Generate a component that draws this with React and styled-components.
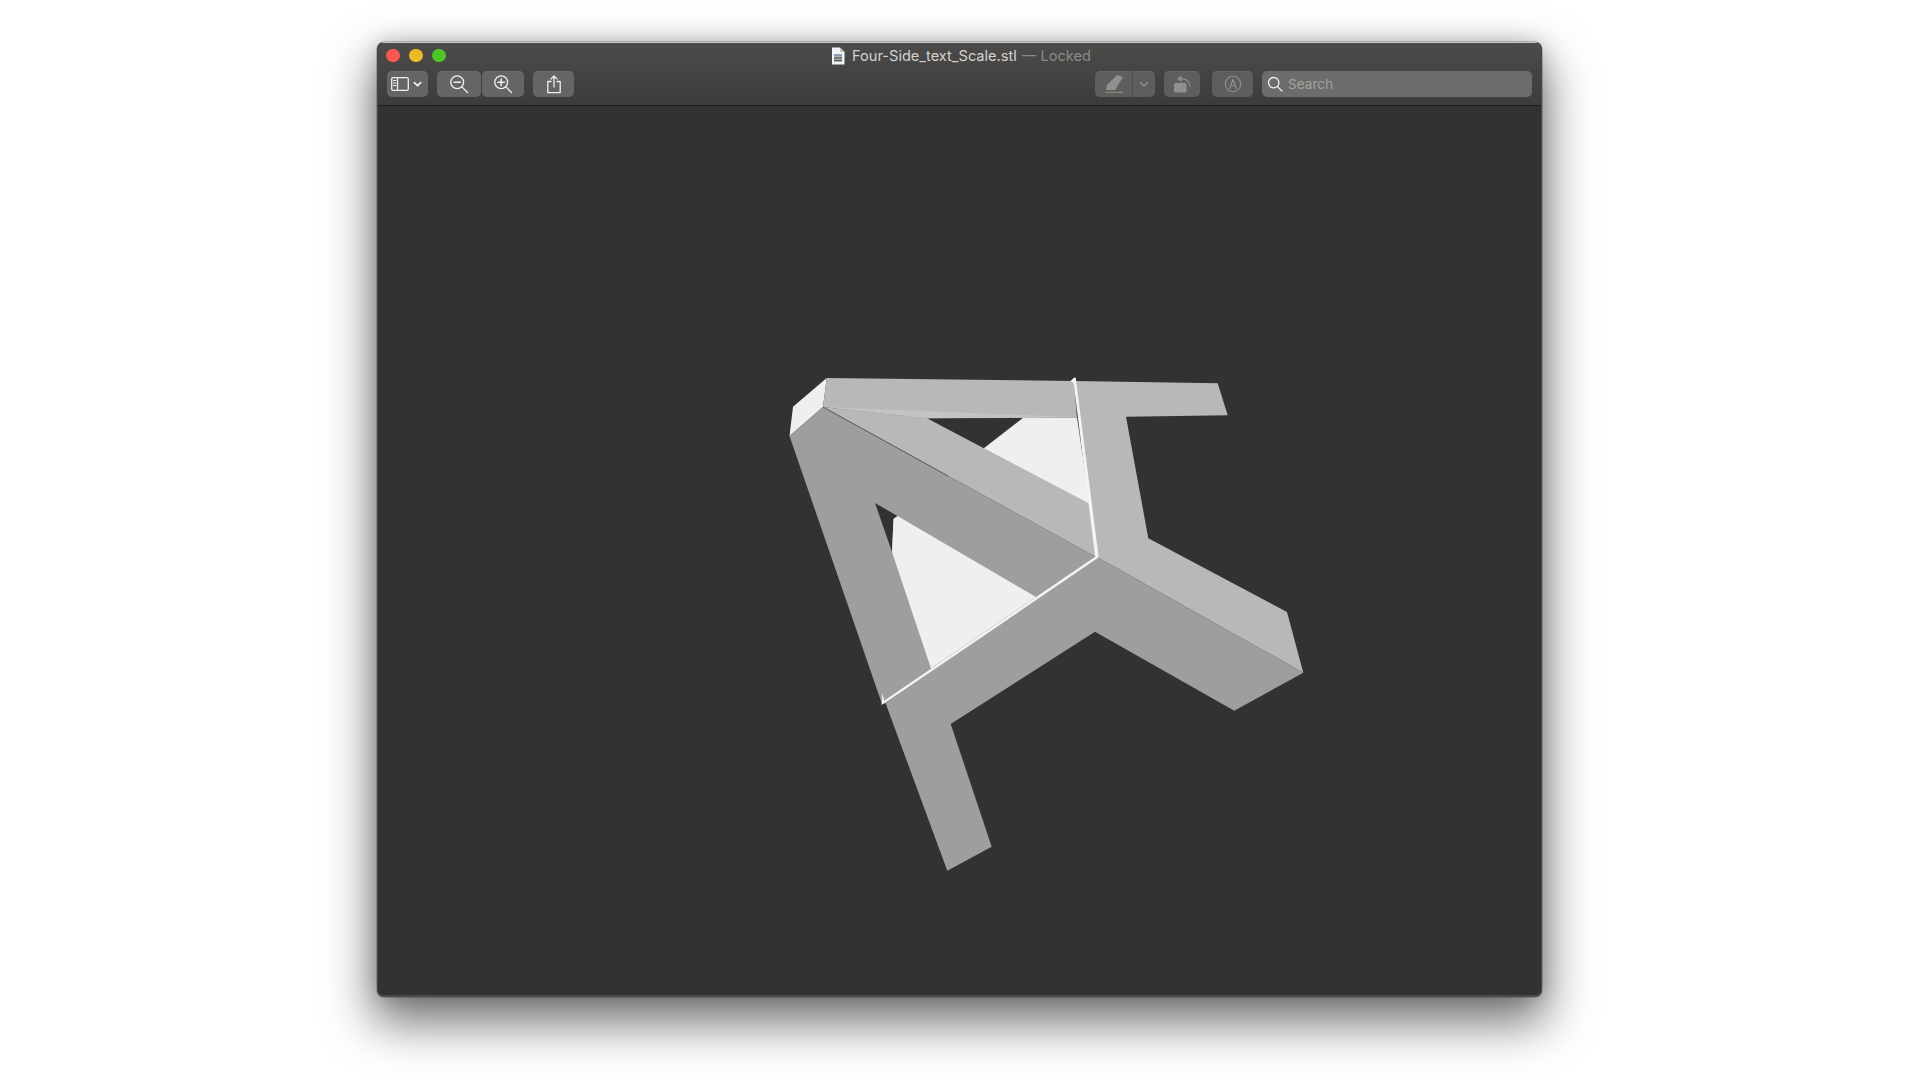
import React from "react";
import styled, { createGlobalStyle } from "styled-components";

const Global = createGlobalStyle`
  html, body { margin: 0; padding: 0; background: #fff; }
  #root { width: 1920px; height: 1080px; overflow: hidden; }
`;

const Page = styled.div`
  width: 1920px;
  height: 1080px;
  padding: 42px 1px 0 0;
  box-sizing: border-box;
  display: flex;
  justify-content: center;
  align-items: flex-start;
  background: #fff;
  font-family: Inter, "Liberation Sans", sans-serif;
`;

const Window = styled.div`
  width: 1165px;
  height: 955px;
  box-sizing: border-box;
  display: flex;
  flex-direction: column;
  border-radius: 7px;
  overflow: hidden;
  background: #323232;
  box-shadow: 0 0 0 0.5px rgba(60, 60, 60, 0.55), 0 22px 48px 4px rgba(0, 0, 0, 0.55), 0 0 20px rgba(0, 0, 0, 0.18);
  border-bottom: 2px solid #4a4a4a;
  border-left: 1px solid #484848;
  border-right: 1px solid #484848;
`;

const Header = styled.header`
  height: 64px;
  flex: none;
  box-sizing: border-box;
  display: flex;
  flex-direction: column;
  background: linear-gradient(#4d4b49, #3d3c3b);
  border-top: 1px solid #c9c9c9;
  border-bottom: 1px solid #1c1c1c;
`;

const TitleRow = styled.div`
  height: 28px;
  flex: none;
  box-sizing: border-box;
  display: grid;
  grid-template-columns: 1fr auto 1fr;
  align-items: center;
  padding: 0 8px 3px;
`;

const Lights = styled.div`
  display: flex;
  gap: 9.5px;
`;

const Light = styled.span`
  width: 13.5px;
  height: 13.5px;
  border-radius: 50%;
  background: ${(p) => p.$c};
`;

const Title = styled.div`
  display: flex;
  align-items: center;
  gap: 7px;
  padding-left: 3px;
  font-size: 14.6px;
  color: #d4d3d2;
  white-space: nowrap;
`;

const Locked = styled.span`
  color: #8b8a88;
  margin-left: 5px;
`;

const Toolbar = styled.div`
  height: 26px;
  display: flex;
  align-items: center;
  padding: 0 9px;
`;

const Btn = styled.div`
  width: ${(p) => p.$w}px;
  height: 26px;
  margin-left: ${(p) => p.$ml || 0}px;
  flex: none;
  box-sizing: border-box;
  display: flex;
  align-items: center;
  justify-content: center;
  border-radius: 5px;
  background: ${(p) => (p.$dim ? "#5f5e5c" : "#666563")};
  box-shadow: inset 0 1px 0 rgba(255, 255, 255, 0.05);
  color: ${(p) => (p.$dim ? "#91908e" : "#f0f0f0")};
`;

const SplitPart = styled.div`
  height: 100%;
  width: ${(p) => p.$w}px;
  display: flex;
  align-items: center;
  justify-content: center;
  border-right: ${(p) => (p.$sep ? "1px solid #4c4b49" : "none")};
  box-sizing: border-box;
`;

const Spacer = styled.div`
  flex: 1;
`;

const Search = styled.div`
  width: 270px;
  height: 26px;
  margin-left: 9px;
  flex: none;
  box-sizing: border-box;
  display: flex;
  align-items: center;
  gap: 5px;
  padding-left: 5px;
  border-radius: 5px;
  background: #6d6c6a;
  color: #a3a2a0;
  font-size: 13.6px;
`;

const Viewer = styled.main`
  flex: 1;
  min-height: 0;
  background: #323232;
`;

const Model = styled.svg`
  display: block;
  width: 100%;
  height: 100%;
`;

const DocIcon = () => (
  <svg width="14" height="18" viewBox="0 0 14 18">
    <path d="M1 0.5h8l4.5 4.5v12.5h-12.5z" fill="#f4f4f4" />
    <path d="M9 0.5v4.5h4.5" fill="#bdbdbd" />
    <rect x="3" y="7" width="8" height="2" fill="#8aa0b8" />
    <rect x="3" y="9.5" width="8" height="2.5" fill="#6f7f70" />
    <rect x="3" y="12.5" width="8" height="2" fill="#54616d" />
  </svg>
);

const stroke = { fill: "none", stroke: "currentColor", strokeLinecap: "round", strokeLinejoin: "round" };

const SidebarIcon = () => (
  <svg width="36" height="18" viewBox="0 0 36 18" {...stroke} strokeWidth="1.3">
    <rect x="1.7" y="2.7" width="16.6" height="12.6" rx="1.4" />
    <path d="M7.5 3v12" />
    <path d="M3.4 5.5h2.4M3.4 8h2.4M3.4 10.5h2.4" strokeWidth="1" />
    <path d="M24.3 7.7l3.2 3 3.2-3" strokeWidth="1.8" />
  </svg>
);

const ZoomIcon = ({ plus }) => (
  <svg width="20" height="20" viewBox="0 0 20 20" {...stroke} strokeWidth="1.3">
    <circle cx="8.2" cy="8.2" r="6.4" />
    <path d="M12.9 12.9l5.6 5.6" />
    <path d="M5 8.2h6.4" strokeWidth="1.5" />
    {plus && <path d="M8.2 5v6.4" strokeWidth="1.5" />}
  </svg>
);

const ShareIcon = () => (
  <svg width="16" height="19" viewBox="0 0 16 19" {...stroke} strokeWidth="1.3">
    <path d="M5 6.5H1.8v11.2h12.4V6.5H11" />
    <path d="M8 12V1.2M4.9 4.1L8 1l3.1 3.1" />
  </svg>
);

const PenIcon = () => (
  <svg width="20" height="20" viewBox="0 0 20 20">
    <path d="M3 11L13 1l6 2-8 13H2z" fill="currentColor" />
    <path d="M1 18.3h18" stroke="currentColor" strokeWidth="1" />
  </svg>
);

const Chevron = () => (
  <svg width="10" height="7" viewBox="0 0 10 7" {...stroke} strokeWidth="1.5">
    <path d="M1.5 1.7L5 5l3.5-3.3" />
  </svg>
);

const RotateIcon = () => (
  <svg width="22" height="20" viewBox="0 0 22 20">
    <rect x="3" y="9" width="12.5" height="9.5" rx="1.5" fill="currentColor" />
    <path d="M9 4.8h2c4 0 8 3 8 8" fill="none" stroke="currentColor" strokeWidth="1.2" />
    <path d="M10.5 1.5V8L6 4.8z" fill="currentColor" />
  </svg>
);

const MarkupIcon = () => (
  <svg width="18" height="18" viewBox="0 0 18 18" {...stroke} strokeWidth="1.1">
    <circle cx="9" cy="9" r="7.7" />
    <path d="M5.8 13.5L9 4.2l3.2 9.3M6.8 10.5h4.4" />
  </svg>
);

const SearchIcon = () => (
  <svg width="16" height="16" viewBox="0 0 16 16" fill="none" stroke="#f0f0f0" strokeWidth="1.3" strokeLinecap="round">
    <circle cx="6.7" cy="6.7" r="5.2" />
    <path d="M10.6 10.6l4.4 4.4" />
  </svg>
);

const pts = (a) => a.map((p) => p.join(",")).join(" ");

const MID = "#9e9e9e";
const LIGHT = "#b8b8b8";
const PALE = "#efefef";
const SEAM = "#f4f4f4";

const ModelDrawing = () => (
  <Model viewBox="378 106 1163 889">
    <polygon fill={PALE} points={pts([[1023.5, 417.5], [1077, 417.5], [1090, 505], [983.5, 448.5]])} />
    <polygon fill={PALE} points={pts([[826.7, 378], [793, 406.7], [789.5, 436], [823, 407]])} />
    <polygon fill={LIGHT} points={pts([[826.7, 378], [1074, 381], [1077, 417.7], [926.5, 418.2], [823, 407]])} />
    <polygon fill="#c3c3c3" points={pts([[823, 407], [1076, 417], [926.5, 418.2]])} />
    <polygon fill={LIGHT} points={pts([[823, 407], [926.5, 418], [1090, 504], [1096, 557]])} />
    <polygon fill={MID} points={pts([[789.5, 436], [823, 407], [1096, 557], [882, 704]])} />
    <polygon fill="#323232" points={pts([[875, 503], [897.5, 516], [893.5, 519], [892, 552]])} />
    <polygon fill={PALE} points={pts([[893.5, 519], [897.5, 516], [1036, 597], [931, 668.5], [892, 552]])} />
    <line x1="823" y1="407" x2="948" y2="476" stroke="#565656" strokeWidth="0.9" />
    <polygon
      fill={LIGHT}
      points={pts([[1074, 381], [1217.7, 383.3], [1227.7, 415.3], [1126, 416.7], [1148.3, 538.3], [1287, 612], [1303.3, 672.7], [1097, 557]])}
    />
    <polygon
      fill={MID}
      points={pts([[1097, 557], [1303.3, 672.7], [1234.3, 710.7], [1095, 631.7], [950.7, 724], [991.7, 846.7], [947.3, 870.7], [885.5, 703]])}
    />
    <line x1="883" y1="703" x2="1097" y2="557" stroke={SEAM} strokeWidth="2.5" />
    <polygon fill={SEAM} points={pts([[1073, 378], [1075.7, 377.7], [1098.7, 557.5], [1095.3, 557.5]])} />
    <polygon fill={SEAM} points={pts([[1070.5, 381], [1074.5, 377.5], [1075.5, 384]])} />
    <polygon fill={SEAM} points={pts([[882.5, 693], [884.5, 702], [881.5, 705.5]])} />
  </Model>
);

export default function App() {
  return (
    <>
      <Global />
      <Page>
        <Window>
          <Header>
            <TitleRow>
              <Lights>
                <Light $c="#fc5753" />
                <Light $c="#e9bd22" />
                <Light $c="#4fc627" />
              </Lights>
              <Title>
                <DocIcon />
                <span>
                  Four-Side_text_Scale.stl<Locked>— Locked</Locked>
                </span>
              </Title>
              <span />
            </TitleRow>
            <Toolbar>
              <Btn $w={41}><SidebarIcon /></Btn>
              <Btn $w={44} $ml={9}><ZoomIcon /></Btn>
              <Btn $w={42} $ml={1}><ZoomIcon plus /></Btn>
              <Btn $w={41} $ml={9}><ShareIcon /></Btn>
              <Spacer />
              <Btn $w={60} $dim>
                <SplitPart $w={38} $sep><PenIcon /></SplitPart>
                <SplitPart $w={22}><Chevron /></SplitPart>
              </Btn>
              <Btn $w={36} $ml={9} $dim><RotateIcon /></Btn>
              <Btn $w={41} $ml={12} $dim><MarkupIcon /></Btn>
              <Search>
                <SearchIcon />
                <span>Search</span>
              </Search>
            </Toolbar>
          </Header>
          <Viewer>
            <ModelDrawing />
          </Viewer>
        </Window>
      </Page>
    </>
  );
}
